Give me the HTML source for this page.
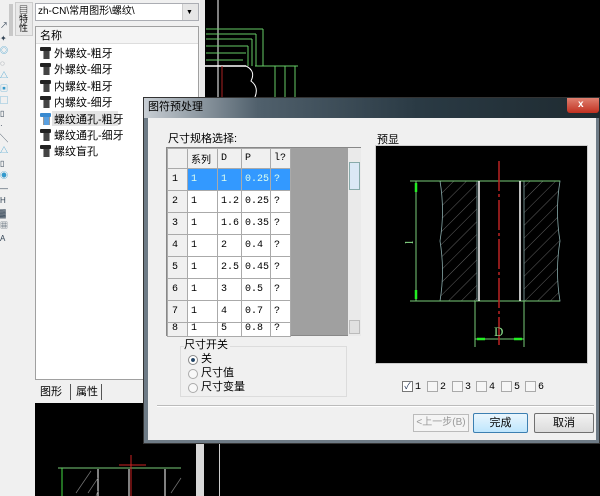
<!DOCTYPE html>
<html><head><meta charset="utf-8"><style>
*{margin:0;padding:0;box-sizing:border-box}
body{width:600px;height:496px;overflow:hidden;background:#000;position:relative;font-family:"Liberation Sans","Noto Sans CJK SC",sans-serif;font-size:11px;color:#000}
.a{position:absolute}
.t{position:absolute;white-space:nowrap;line-height:1}
.mono{font-family:"Liberation Mono","Noto Sans CJK SC",monospace;font-size:10px}
.ic{display:inline-block;width:11px;height:12px;position:relative;vertical-align:-2px;margin-right:3px}
.ic:before{content:"";position:absolute;left:0;top:0;width:11px;height:4px;background:#222;border-radius:1px}
.ic:after{content:"";position:absolute;left:3px;top:4px;width:5px;height:8px;background:#444;border-left:1px solid #999;border-right:1px solid #999}
.ic.s:before{background:#3a8ad0}.ic.s:after{background:#5aa0e0}
.cb{position:absolute;top:381px;width:11px;height:11px;border:1px solid #aaa;background:#f6f6f6}
.cl{position:absolute;top:383px;font-family:"Liberation Mono",monospace;font-size:10px;line-height:1}
</style></head><body>
<!-- left toolbar -->
<div class="a" style="left:0;top:0;width:35px;height:496px;background:#f0f0f0"></div>
<div class="a" style="left:9px;top:4px;width:4px;height:32px;background:#c8c8c8"></div>
<div class="a" style="left:15px;top:2px;width:18px;height:34px;background:#e8e8e8;border:1px solid #ccc"></div>
<div class="t" style="left:18px;top:5px;font-size:9px;writing-mode:vertical-rl">▤特性</div>
<div class="a" style="left:0;top:20px;width:8px;height:270px;color:#345;font-size:8px;line-height:12.5px">
<div>↗</div><div>✦</div><div style="color:#39c">◎</div><div>◌</div><div style="color:#39c">△</div><div style="color:#39c">▣</div><div style="color:#39c">▢</div><div>▯</div><div>·</div><div>╲</div><div style="color:#39c">△</div><div>▯</div><div style="color:#39c">◉</div><div>—</div><div>H</div><div>▓</div><div>▦</div><div>A</div></div>
<!-- palette -->
<div class="a" style="left:34px;top:0;width:170px;height:403px;background:#f0f0f0"></div>
<div class="a" style="left:35px;top:3px;width:164px;height:18px;background:#fff;border:1px solid #abadb3"></div>
<div class="t" style="left:38px;top:7px;font-size:10px">zh-CN\常用图形\螺纹\</div>
<div class="a" style="left:182px;top:4px;width:16px;height:16px;background:#e6e6e6;border-left:1px solid #ccc"></div>
<div class="t" style="left:186px;top:9px;font-size:7px">▼</div>
<div class="a" style="left:35px;top:26px;width:164px;height:354px;background:#fff;border:1px solid #a0a0a0"></div>
<div class="a" style="left:36px;top:27px;width:162px;height:17px;background:#f4f4f4;border-bottom:1px solid #ddd"></div>
<div class="t" style="left:40px;top:31px">名称</div>
<div class="a" style="left:52px;top:111px;width:66px;height:15px;background:#e4e4e4"></div>
<div class="a" style="left:40px;top:46px;font-size:11px;line-height:16.4px">
<div><i class="ic"></i>外螺纹-粗牙</div><div><i class="ic"></i>外螺纹-细牙</div><div><i class="ic"></i>内螺纹-粗牙</div><div><i class="ic"></i>内螺纹-细牙</div><div><i class="ic s"></i>螺纹通孔-粗牙</div><div><i class="ic"></i>螺纹通孔-细牙</div><div><i class="ic"></i>螺纹盲孔</div></div>
<!-- tabs -->
<div class="t" style="left:40px;top:387px">图形</div>
<div class="a" style="left:70px;top:384px;width:1px;height:16px;background:#555"></div>
<div class="t" style="left:76px;top:387px">属性</div>
<div class="a" style="left:101px;top:384px;width:1px;height:16px;background:#555"></div>
<div class="a" style="left:36px;top:403px;width:164px;height:93px;background:#000"></div>
<svg class="a" style="left:36px;top:403px" width="164" height="93">
<line x1="22" y1="65" x2="145" y2="65" stroke="#7c7" stroke-width="1"/>
<line x1="26" y1="65" x2="26" y2="93" stroke="#4d4"/>
<line x1="95" y1="52" x2="95" y2="93" stroke="#c22"/>
<line x1="83" y1="62" x2="110" y2="62" stroke="#c22"/>
<line x1="62" y1="66" x2="62" y2="93" stroke="#fff"/>
<line x1="93" y1="66" x2="93" y2="93" stroke="#fff"/><line x1="129" y1="66" x2="129" y2="93" stroke="#fff"/>
<g stroke="#777" stroke-width=".7"><line x1="52" y1="90" x2="62" y2="75"/><line x1="60" y1="93" x2="62" y2="88"/><line x1="135" y1="90" x2="145" y2="75"/><line x1="40" y1="90" x2="55" y2="68"/></g>
</svg>
<!-- CAD top -->
<svg class="a" style="left:200px;top:0" width="400" height="97">
<rect x="0" y="0" width="5" height="97" fill="#e8e8e8"/>
<line x1="18" y1="0" x2="18" y2="97" stroke="#fff"/>
<g stroke="#6c6" stroke-width="1">
<line x1="6" y1="29" x2="63" y2="29"/><line x1="63" y1="29" x2="63" y2="66"/>
<line x1="6" y1="34" x2="56" y2="34"/><line x1="56" y1="34" x2="56" y2="66"/>
<line x1="6" y1="39" x2="52" y2="39"/><line x1="52" y1="39" x2="52" y2="66"/>
<line x1="6" y1="46" x2="48" y2="46"/><line x1="48" y1="46" x2="48" y2="66"/>
<line x1="6" y1="53" x2="46" y2="53"/><line x1="6" y1="60" x2="43" y2="60"/>
<line x1="55" y1="66" x2="98" y2="66"/><line x1="75" y1="66" x2="75" y2="97"/><line x1="85" y1="66" x2="85" y2="97"/><line x1="95" y1="66" x2="95" y2="97"/>
</g>
<line x1="5" y1="66" x2="46" y2="66" stroke="#fff" stroke-width="1.5"/>
<line x1="22" y1="66" x2="22" y2="97" stroke="#a22"/>
<path d="M46 66 q10 5 5 15 q8 6 4 16" stroke="#fff" fill="none"/>
</svg>
<!-- dialog -->
<div class="a" style="left:143px;top:97px;width:457px;height:347px;background:#6e7b86;border:1px solid #333"></div>
<div class="a" style="left:144px;top:98px;width:456px;height:20px;background:linear-gradient(90deg,#c8ced4 0,#50606c 25%,#2a3a44 60%,#1e2a30 100%)"></div>
<div class="t" style="left:148px;top:102px;font-size:11px">图符预处理</div>
<div class="a" style="left:567px;top:98px;width:32px;height:15px;background:linear-gradient(#e08070,#c03020);border-radius:0 0 3px 3px"></div>
<div class="t" style="left:578px;top:100px;color:#fff;font-weight:bold;font-size:10px">x</div>
<div class="a" style="left:148px;top:118px;width:448px;height:322px;background:#f0f0f0"></div>
<div class="t" style="left:168px;top:134px">尺寸规格选择:</div>
<!-- table -->
<div class="a" style="left:166px;top:147px;width:195px;height:189px;background:#a0a0a0;border:1px solid #888"></div>
<div class="a" style="left:348px;top:148px;width:13px;height:188px;background:#eaeaea"></div>
<div class="a" style="left:349px;top:162px;width:11px;height:28px;background:#dbe8f5;border:1px solid #8aa"></div>
<div class="a" style="left:349px;top:320px;width:11px;height:14px;background:#e0e0e0;border:1px solid #bbb"></div>
<table class="a mono" style="left:167px;top:148px;border-collapse:collapse;font-size:10px">
<tr style="height:20px;background:#f0f0f0"><td style="width:20px;border:1px solid #aaa"></td><td style="width:30px;border:1px solid #aaa;font-family:'Noto Sans CJK SC';font-size:10px;padding-left:3px">系列</td><td style="width:24px;border:1px solid #aaa;padding-left:3px">D</td><td style="width:29px;border:1px solid #aaa;padding-left:3px">P</td><td style="width:20px;border:1px solid #aaa;padding-left:3px">l?</td></tr>
<tr style="height:22px"><td style="background:#f0f0f0;border:1px solid #aaa;padding-left:4px">1</td><td style="background:#3399ff;color:#dfe;border:1px solid #aaa;padding-left:3px">1</td><td style="background:#3399ff;color:#dfe;border:1px solid #aaa;padding-left:3px">1</td><td style="background:#3399ff;color:#dfe;border:1px solid #aaa;padding-left:3px">0.25</td><td style="background:#3399ff;color:#dfe;border:1px solid #aaa;padding-left:3px">?</td></tr>
<tr style="height:22px;background:#fff"><td style="background:#f0f0f0;border:1px solid #aaa;padding-left:4px">2</td><td style="border:1px solid #aaa;padding-left:3px">1</td><td style="border:1px solid #aaa;padding-left:3px">1.2</td><td style="border:1px solid #aaa;padding-left:3px">0.25</td><td style="border:1px solid #aaa;padding-left:3px">?</td></tr>
<tr style="height:22px;background:#fff"><td style="background:#f0f0f0;border:1px solid #aaa;padding-left:4px">3</td><td style="border:1px solid #aaa;padding-left:3px">1</td><td style="border:1px solid #aaa;padding-left:3px">1.6</td><td style="border:1px solid #aaa;padding-left:3px">0.35</td><td style="border:1px solid #aaa;padding-left:3px">?</td></tr>
<tr style="height:22px;background:#fff"><td style="background:#f0f0f0;border:1px solid #aaa;padding-left:4px">4</td><td style="border:1px solid #aaa;padding-left:3px">1</td><td style="border:1px solid #aaa;padding-left:3px">2</td><td style="border:1px solid #aaa;padding-left:3px">0.4</td><td style="border:1px solid #aaa;padding-left:3px">?</td></tr>
<tr style="height:22px;background:#fff"><td style="background:#f0f0f0;border:1px solid #aaa;padding-left:4px">5</td><td style="border:1px solid #aaa;padding-left:3px">1</td><td style="border:1px solid #aaa;padding-left:3px">2.5</td><td style="border:1px solid #aaa;padding-left:3px">0.45</td><td style="border:1px solid #aaa;padding-left:3px">?</td></tr>
<tr style="height:22px;background:#fff"><td style="background:#f0f0f0;border:1px solid #aaa;padding-left:4px">6</td><td style="border:1px solid #aaa;padding-left:3px">1</td><td style="border:1px solid #aaa;padding-left:3px">3</td><td style="border:1px solid #aaa;padding-left:3px">0.5</td><td style="border:1px solid #aaa;padding-left:3px">?</td></tr>
<tr style="height:22px;background:#fff"><td style="background:#f0f0f0;border:1px solid #aaa;padding-left:4px">7</td><td style="border:1px solid #aaa;padding-left:3px">1</td><td style="border:1px solid #aaa;padding-left:3px">4</td><td style="border:1px solid #aaa;padding-left:3px">0.7</td><td style="border:1px solid #aaa;padding-left:3px">?</td></tr>
<tr style="height:14px;background:#fff;vertical-align:top"><td style="background:#f0f0f0;border:1px solid #aaa;padding-left:4px">8</td><td style="border:1px solid #aaa;padding-left:3px">1</td><td style="border:1px solid #aaa;padding-left:3px">5</td><td style="border:1px solid #aaa;padding-left:3px">0.8</td><td style="border:1px solid #aaa;padding-left:3px">?</td></tr>
</table>
<!-- radio group -->
<div class="a" style="left:180px;top:346px;width:167px;height:51px;border:1px solid #dcdcdc"></div>
<div class="t" style="left:184px;top:340px;background:#f0f0f0;padding-right:2px">尺寸开关</div>
<div class="a" style="left:188px;top:355px;width:10px;height:10px;border-radius:50%;border:1px solid #888;background:radial-gradient(#246 0,#246 30%,#fff 40%)"></div>
<div class="t" style="left:201px;top:354px">关</div>
<div class="a" style="left:188px;top:369px;width:10px;height:10px;border-radius:50%;border:1px solid #aaa;background:#f8f8f8"></div>
<div class="t" style="left:201px;top:368px">尺寸值</div>
<div class="a" style="left:188px;top:383px;width:10px;height:10px;border-radius:50%;border:1px solid #aaa;background:#f8f8f8"></div>
<div class="t" style="left:201px;top:382px">尺寸变量</div>
<!-- preview -->
<div class="t" style="left:377px;top:135px">预显</div>
<div class="a" style="left:375px;top:145px;width:213px;height:219px;background:#000;border:1px solid #ccc"></div>
<svg class="a" style="left:375px;top:145px" width="213" height="219">
<defs><pattern id="h" width="9" height="9" patternUnits="userSpaceOnUse" patternTransform="rotate(45)"><line x1="0" y1="0" x2="0" y2="9" stroke="#888" stroke-width=".7"/></pattern></defs>
<path d="M65 36 q5 30 0 60 q5 30 0 60 L102 156 L102 36 Z" fill="url(#h)" stroke="#8aa" stroke-width=".8"/>
<path d="M149 36 L185 36 q-5 30 0 60 q-5 30 0 60 L149 156 Z" fill="url(#h)" stroke="#8aa" stroke-width=".8"/>
<g stroke="#7c7" stroke-width="1"><line x1="35" y1="36" x2="185" y2="36"/><line x1="35" y1="156" x2="185" y2="156"/><line x1="41" y1="36" x2="41" y2="156"/><line x1="100" y1="156" x2="100" y2="202"/><line x1="149" y1="156" x2="149" y2="202"/><line x1="100" y1="194" x2="149" y2="194"/></g>
<g stroke="#2e2" stroke-width="2.5"><line x1="41" y1="38" x2="41" y2="47"/><line x1="41" y1="145" x2="41" y2="154"/><line x1="102" y1="194" x2="110" y2="194"/><line x1="139" y1="194" x2="147" y2="194"/></g>
<line x1="104" y1="36" x2="104" y2="156" stroke="#fff" stroke-width="1.5"/>
<line x1="145" y1="36" x2="145" y2="156" stroke="#fff" stroke-width="1.5"/>
<line x1="124" y1="16" x2="124" y2="200" stroke="#b22" stroke-width="1.5" stroke-dasharray="30 3 3 3"/>
<text x="119" y="191" fill="#8d8" font-size="13" font-family="Liberation Serif">D</text>
<text x="0" y="0" fill="#8d8" font-size="12" font-family="Liberation Serif" transform="translate(38,99) rotate(-90)">l</text>
</svg>
<!-- checkboxes -->
<div class="cb" style="left:402px;border-color:#777;background:#fff;font-size:9px;line-height:9px;color:#235;text-align:center">✓</div><div class="cl" style="left:415px">1</div>
<div class="cb" style="left:427px"></div><div class="cl" style="left:440px">2</div>
<div class="cb" style="left:452px"></div><div class="cl" style="left:465px">3</div>
<div class="cb" style="left:476px"></div><div class="cl" style="left:489px">4</div>
<div class="cb" style="left:501px"></div><div class="cl" style="left:514px">5</div>
<div class="cb" style="left:525px"></div><div class="cl" style="left:538px">6</div>
<div class="a" style="left:157px;top:405px;width:437px;height:2px;border-top:1px solid #bbb;border-bottom:1px solid #fff"></div>
<!-- buttons -->
<div class="a" style="left:413px;top:414px;width:56px;height:18px;border:1px solid #bbb;background:#f4f4f4;color:#999;text-align:center;line-height:16px;font-size:10px">&lt;上一步(B)</div>
<div class="a" style="left:473px;top:413px;width:55px;height:20px;border:1px solid #3c7fb1;border-radius:2px;background:linear-gradient(#eaf6fd,#bee6fd);text-align:center;line-height:18px">完成</div>
<div class="a" style="left:534px;top:413px;width:60px;height:20px;border:1px solid #707070;border-radius:2px;background:linear-gradient(#f2f2f2,#dcdcdc);text-align:center;line-height:18px">取消</div>
<!-- below dialog -->
<div class="a" style="left:196px;top:444px;width:8px;height:52px;background:#d8d8d8"></div>
<div class="a" style="left:219px;top:444px;width:1px;height:52px;background:#ccc"></div>
</body></html>
